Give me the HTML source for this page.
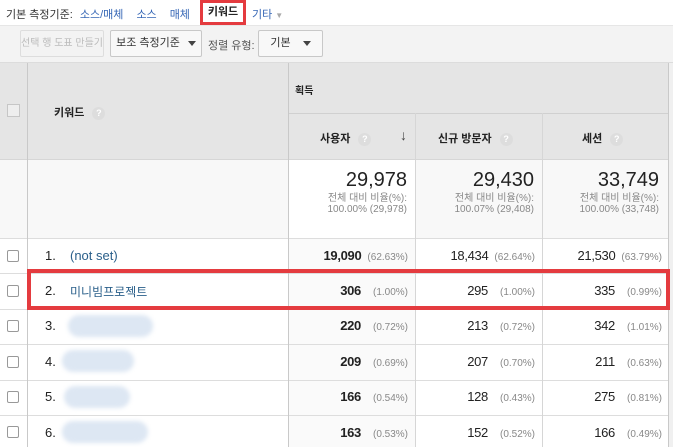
<!DOCTYPE html>
<html><head><meta charset="utf-8"><style>
*{box-sizing:border-box;margin:0;padding:0}
body{width:673px;height:447px;overflow:hidden;background:#fff;font-family:"Liberation Sans","Noto Sans CJK KR",sans-serif;position:relative;color:#222}
.a{position:absolute}
.nav{font-size:11px;top:6px;color:#333}
.lnk{color:#3566b5}
.btn{position:absolute;top:30px;height:27px;border:1px solid #c8c8c8;border-radius:2px;background:#f8f8f8;font-size:11px;line-height:25px;text-align:center;color:#333}
.tri{display:inline-block;width:0;height:0;border-left:4px solid transparent;border-right:4px solid transparent;border-top:5px solid #444;vertical-align:middle;margin-left:8px}
.vl{position:absolute;width:1px;background:#c9c9c9}
.hl{position:absolute;height:1px;background:#ddd}
.q{display:inline-block;width:13px;height:13px;border-radius:50%;background:#ddd;color:#fff;font-size:9px;line-height:13px;text-align:center;margin-left:8px;vertical-align:middle}
.hd{font-size:11px;font-weight:bold;color:#222}
.big{font-size:20px;color:#222;text-align:right}
.sm{font-size:10px;color:#888;text-align:right;line-height:11px}
.cb{position:absolute;left:7px;width:12px;height:12px;border:1px solid #999;border-radius:2px;background:#fff}
.num{position:absolute;font-size:13px;text-align:right;letter-spacing:-0.3px}
.num b{font-weight:bold}
.num span{font-size:10px;color:#888;margin-left:6px;letter-spacing:0}
.blob{position:absolute;height:22px;border-radius:11px;background:#dde7f3;filter:blur(2px)}
</style></head><body>
<div class="a nav" style="left:6px">기본 측정기준: <span class="lnk" style="margin-left:4px">소스/매체</span><span class="lnk" style="margin-left:13px">소스</span><span class="lnk" style="margin-left:13px">매체</span></div>
<div class="a" style="left:200px;top:0;width:46px;height:25px;border:3px solid #e43b3f;font-size:11px;font-weight:bold;text-align:center;line-height:19px">키워드</div>
<div class="a nav lnk" style="left:252px">기타 <span style="color:#aaa;font-size:8px">▼</span></div>
<div class="a" style="left:0;top:25px;width:673px;height:38px;background:#f3f3f3;border-top:1px solid #e6e6e6;border-bottom:1px solid #dcdcdc"></div>
<div class="btn" style="left:20px;width:84px;color:#bbb;font-size:10px;background:#f3f3f3;border-color:#ddd">선택 행 도표 만들기</div>
<div class="btn" style="left:110px;width:92px">보조 측정기준<span class="tri"></span></div>
<div class="a" style="left:208px;top:37px;font-size:11px;color:#555">정렬 유형:</div>
<div class="btn" style="left:258px;width:65px">기본<span class="tri" style="margin-left:12px"></span></div>
<!-- header -->
<div class="a" style="left:0;top:63px;width:669px;height:97px;background:#e5e5e5"></div>
<div class="a" style="left:669px;top:63px;width:4px;height:384px;background:#f0f0f0"></div>
<div class="hl" style="left:288px;top:113px;width:381px;background:#d0d0d0"></div>
<div class="a" style="left:7px;top:104px;width:13px;height:13px;border:1px solid #c6c6c6;background:#eee"></div>
<div class="a hd" style="left:54px;top:104px">키워드<span class="q">?</span></div>
<div class="a hd" style="left:295px;top:82px;font-size:10px">획득</div>
<div class="a hd" style="left:320px;top:130px">사용자<span class="q">?</span></div>
<div class="a" style="left:400px;top:127px;font-size:14px;color:#444;font-weight:bold">↓</div>
<div class="a hd" style="left:438px;top:130px">신규 방문자<span class="q">?</span></div>
<div class="a hd" style="left:582px;top:130px">세션<span class="q">?</span></div>
<!-- totals -->
<div class="a" style="left:0;top:160px;width:669px;height:78px;background:#f8f8f8"></div>
<div class="a" style="left:289px;top:160px;width:126px;height:78px;background:#fff"></div>
<div class="a big" style="left:288px;top:169px;width:119px">29,978</div>
<div class="a sm" style="left:288px;top:193px;width:119px">전체 대비 비율(%):<br>100.00% (29,978)</div>
<div class="a big" style="left:415px;top:169px;width:119px">29,430</div>
<div class="a sm" style="left:415px;top:193px;width:119px">전체 대비 비율(%):<br>100.07% (29,408)</div>
<div class="a big" style="left:542px;top:169px;width:117px">33,749</div>
<div class="a sm" style="left:542px;top:193px;width:117px">전체 대비 비율(%):<br>100.00% (33,748)</div>
<div class="hl" style="left:0;top:159px;width:669px;background:#d6d6d6"></div>
<div class="hl" style="left:0;top:238px;width:669px"></div>
<div class="a" style="left:289px;top:239px;width:126px;height:208px;background:#fafafa"></div>
<div class="hl" style="left:0;top:273px;width:669px"></div>
<div class="hl" style="left:0;top:309px;width:669px"></div>
<div class="hl" style="left:0;top:344px;width:669px"></div>
<div class="hl" style="left:0;top:380px;width:669px"></div>
<div class="hl" style="left:0;top:415px;width:669px"></div>
<!-- vertical lines -->
<div class="vl" style="left:27px;top:63px;height:384px"></div>
<div class="vl" style="left:288px;top:63px;height:384px"></div>
<div class="vl" style="left:415px;top:113px;height:334px;background:#d6d6d6"></div>
<div class="vl" style="left:542px;top:113px;height:334px;background:#d6d6d6"></div>
<div class="vl" style="left:668px;top:63px;height:384px"></div>
<!-- row contents -->
<div class="cb" style="top:250px"></div><div class="cb" style="top:285px"></div><div class="cb" style="top:320px"></div><div class="cb" style="top:356px"></div><div class="cb" style="top:391px"></div><div class="cb" style="top:426px"></div>
<div class="a" style="left:45px;top:248px;font-size:13px">1.</div>
<div class="a" style="left:70px;top:248px;font-size:13px;color:#2a5f8a">(not set)</div>
<div class="a" style="left:45px;top:283px;font-size:13px">2.</div>
<div class="a" style="left:70px;top:283px;font-size:12px;color:#2a5f8a">미니빔프로젝트</div>
<div class="a" style="left:45px;top:318px;font-size:13px">3.</div>
<div class="a" style="left:45px;top:354px;font-size:13px">4.</div>
<div class="a" style="left:45px;top:389px;font-size:13px">5.</div>
<div class="a" style="left:45px;top:425px;font-size:13px">6.</div>
<div class="blob" style="left:68px;top:315px;width:85px"></div>
<div class="blob" style="left:62px;top:350px;width:72px"></div>
<div class="blob" style="left:64px;top:386px;width:66px"></div>
<div class="blob" style="left:62px;top:421px;width:86px"></div>

<div class="num" style="left:288px;width:120px;top:248px"><b>19,090</b><span>(62.63%)</span></div>
<div class="num" style="left:415px;width:120px;top:248px">18,434<span>(62.64%)</span></div>
<div class="num" style="left:542px;width:120px;top:248px">21,530<span>(63.79%)</span></div>
<div class="num" style="left:288px;width:120px;top:283px"><b>306</b><span style="margin-left:12px">(1.00%)</span></div>
<div class="num" style="left:415px;width:120px;top:283px">295<span style="margin-left:12px">(1.00%)</span></div>
<div class="num" style="left:542px;width:120px;top:283px">335<span style="margin-left:12px">(0.99%)</span></div>
<div class="num" style="left:288px;width:120px;top:318px"><b>220</b><span style="margin-left:12px">(0.72%)</span></div>
<div class="num" style="left:415px;width:120px;top:318px">213<span style="margin-left:12px">(0.72%)</span></div>
<div class="num" style="left:542px;width:120px;top:318px">342<span style="margin-left:12px">(1.01%)</span></div>
<div class="num" style="left:288px;width:120px;top:354px"><b>209</b><span style="margin-left:12px">(0.69%)</span></div>
<div class="num" style="left:415px;width:120px;top:354px">207<span style="margin-left:12px">(0.70%)</span></div>
<div class="num" style="left:542px;width:120px;top:354px">211<span style="margin-left:12px">(0.63%)</span></div>
<div class="num" style="left:288px;width:120px;top:389px"><b>166</b><span style="margin-left:12px">(0.54%)</span></div>
<div class="num" style="left:415px;width:120px;top:389px">128<span style="margin-left:12px">(0.43%)</span></div>
<div class="num" style="left:542px;width:120px;top:389px">275<span style="margin-left:12px">(0.81%)</span></div>
<div class="num" style="left:288px;width:120px;top:425px"><b>163</b><span style="margin-left:12px">(0.53%)</span></div>
<div class="num" style="left:415px;width:120px;top:425px">152<span style="margin-left:12px">(0.52%)</span></div>
<div class="num" style="left:542px;width:120px;top:425px">166<span style="margin-left:12px">(0.49%)</span></div>
<!-- red highlight -->
<div class="a" style="left:27px;top:269px;width:643px;height:41px;border:4px solid #e43b3f"></div>
</body></html>
